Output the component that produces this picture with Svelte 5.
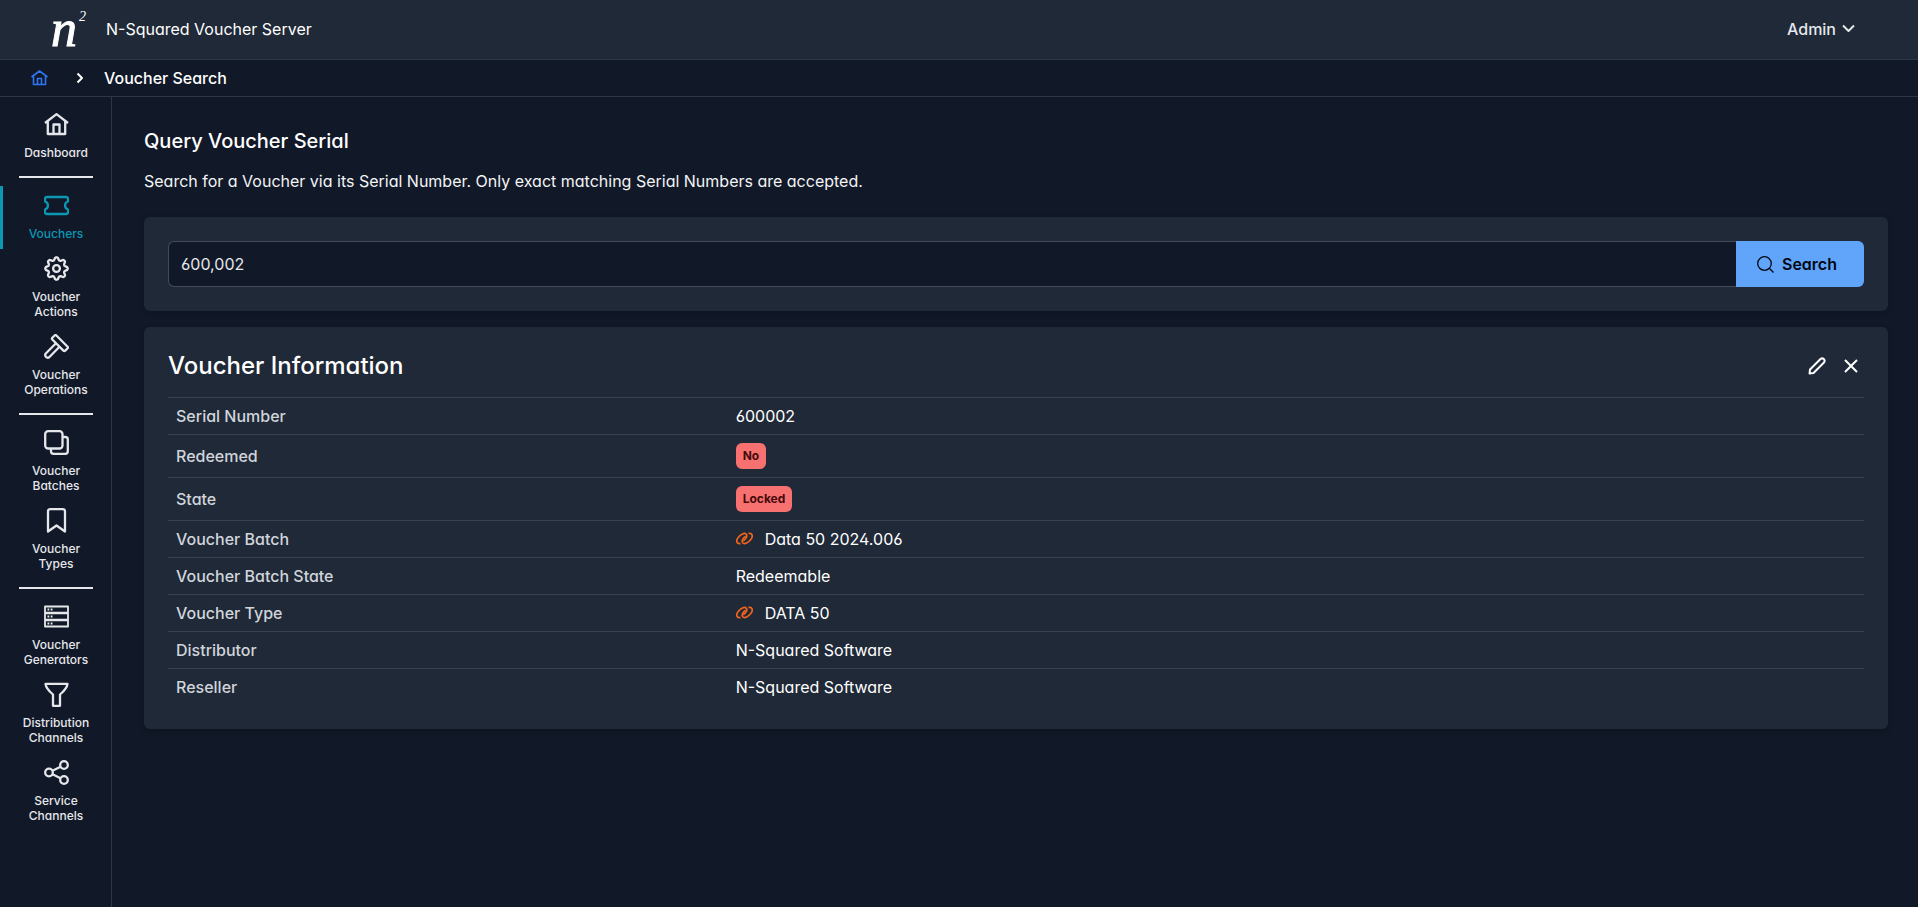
<script lang="ts">
  type IconName =
    | 'home' | 'ticket' | 'gear' | 'hammer' | 'batches' | 'bookmark' | 'server' | 'funnel' | 'share'

  interface NavItem {
    label: string
    icon: IconName
    active?: boolean
  }

  interface Row {
    label: string
    value: string
    kind?: 'tag' | 'link'
  }

  const navGroups: NavItem[][] = [
    [{ label: 'Dashboard', icon: 'home' }],
    [
      { label: 'Vouchers', icon: 'ticket', active: true },
      { label: 'Voucher Actions', icon: 'gear' },
      { label: 'Voucher Operations', icon: 'hammer' },
    ],
    [
      { label: 'Voucher Batches', icon: 'batches' },
      { label: 'Voucher Types', icon: 'bookmark' },
    ],
    [
      { label: 'Voucher Generators', icon: 'server' },
      { label: 'Distribution Channels', icon: 'funnel' },
      { label: 'Service Channels', icon: 'share' },
    ],
  ]

  const rows: Row[] = [
    { label: 'Serial Number', value: '600002' },
    { label: 'Redeemed', value: 'No', kind: 'tag' },
    { label: 'State', value: 'Locked', kind: 'tag' },
    { label: 'Voucher Batch', value: 'Data 50 2024.006', kind: 'link' },
    { label: 'Voucher Batch State', value: 'Redeemable' },
    { label: 'Voucher Type', value: 'DATA 50', kind: 'link' },
    { label: 'Distributor', value: 'N-Squared Software' },
    { label: 'Reseller', value: 'N-Squared Software' },
  ]

  let serial = $state('600,002')
  let showResult = $state(true)

  // Eight-lobed outline for the settings icon
  const gearPath = (() => {
    const points: string[] = []
    for (let i = 0; i <= 96; i++) {
      const a = (i / 96) * Math.PI * 2
      const wave = Math.cos(a * 8)
      const r = 9.8 + 1.4 * Math.sign(wave) * Math.pow(Math.abs(wave), 0.6)
      points.push(`${(12.5 + r * Math.sin(a)).toFixed(2)} ${(12.5 - r * Math.cos(a)).toFixed(2)}`)
    }
    return `M${points.join('L')}Z`
  })()
</script>

{#snippet icon(name: IconName)}
  <svg class="icon" viewBox="0 0 25 25" aria-hidden="true">
    {#if name === 'home'}
      <path d="M1 11L12.500 2.200L24 11M3.800 9.500V22H21.200V9.500M9.500 22V12.500H15.500V22" />
    {:else if name === 'ticket'}
      <path d="M3 4H22Q24 4 24 6V8.500A4.200 4.200 0 0 0 24 16.500V19Q24 21 22 21H3Q1 21 1 19V16.500A4.200 4.200 0 0 0 1 8.500V6Q1 4 3 4Z" />
    {:else if name === 'gear'}
      <path d={gearPath} />
      <circle cx="12.5" cy="12.5" r="3.4" />
    {:else if name === 'hammer'}
      <path d="M8.300 3.800L10.600 1.500Q11.500 0.700 12.400 1.500L23.600 12.700Q24.300 13.500 23.600 14.300L21.300 16.600Q20.300 17.400 19.400 16.600L8.300 5.500Q7.500 4.600 8.300 3.800Z" />
      <path d="M12 9.300L1.800 19.500Q0.600 21 1.800 22.700Q3.500 24.400 5.200 23.200L15.500 12.800" />
    {:else if name === 'batches'}
      <rect x="1.200" y="1.200" width="17.300" height="17.300" rx="3" />
      <path d="M19 7H21.300Q23.800 7 23.800 9.500V21.300Q23.800 23.800 21.300 23.800H9.500Q7 23.800 7 21.300V19" />
    {:else if name === 'bookmark'}
      <path d="M4 23.500V3.500Q4 1.200 6.300 1.200H18.700Q21 1.200 21 3.500V23.500L12.500 17.500Z" />
    {:else if name === 'server'}
      <path stroke-width="1.8" d="M1 2.500H24V22.500H1Z" />
      <path stroke-width="2.6" d="M1 9H24M1 16H24" />
      <path stroke-width="1.8" d="M3.500 5.500H5.300M6.700 5.500H8.500M3.500 12.500H5.300M6.700 12.500H8.500M3.500 19.500H5.300M6.700 19.500H8.500" />
    {:else if name === 'funnel'}
      <path d="M1.500 1.800H23.500Q23 6.500 16 12.500V23.800H9V12.500Q2 6.500 1.500 1.800Z" />
    {:else if name === 'share'}
      <circle cx="5" cy="12.5" r="3.800" />
      <circle cx="20" cy="5" r="3.800" />
      <circle cx="20" cy="20" r="3.800" />
      <path d="M8.500 10.700L16.500 6.800M8.500 14.300L16.500 18.200" />
    {/if}
  </svg>
{/snippet}

<div class="layout">
  <header class="topbar">
    <span class="logo"><i>n</i><sup>2</sup></span>
    <span class="app-name">N-Squared Voucher Server</span>
    <button class="user-menu" type="button">
      Admin
      <svg width="13" height="9" viewBox="0 0 13 9" aria-hidden="true"><path d="M1 1.500L6.500 7L12 1.500" /></svg>
    </button>
  </header>

  <nav class="breadcrumb" aria-label="Breadcrumb">
    <a class="crumb-home" href="#home" aria-label="Home">
      <svg width="17" height="16" viewBox="0 0 17 16" aria-hidden="true">
        <path d="M0.500 7L8.500 1L16.500 7M2.500 6V14.500H14.500V6M6.500 14.500V8.500H10.500V14.500" />
      </svg>
    </a>
    <svg class="separator" width="8" height="12" viewBox="0 0 8 12" aria-hidden="true"><path d="M1.500 1.500L6 6L1.500 10.500" /></svg>
    <span class="crumb-current">Voucher Search</span>
  </nav>

  <div class="body">
    <nav class="sidebar" aria-label="Main">
      {#each navGroups as group}
        <ul>
          {#each group as item}
            <li>
              <a class="nav-item" class:active={item.active} href="#{item.icon}">
                {@render icon(item.icon)}
                <span>{item.label}</span>
              </a>
            </li>
          {/each}
        </ul>
      {/each}
    </nav>

    <main>
      <h1>Query Voucher Serial</h1>
      <p>Search for a Voucher via its Serial Number. Only exact matching Serial Numbers are accepted.</p>

      <form class="card search" onsubmit={(e) => { e.preventDefault(); showResult = true }}>
        <input type="text" aria-label="Serial Number" bind:value={serial} />
        <button type="submit">
          <svg width="17" height="17" viewBox="0 0 17 17" aria-hidden="true">
            <circle cx="7.500" cy="7.500" r="6.800" />
            <path d="M12.300 12.300L16.500 16.500" />
          </svg>
          Search
        </button>
      </form>

      {#if showResult}
        <section class="card result">
          <div class="result-head">
            <h2>Voucher Information</h2>
            <button type="button" aria-label="Edit">
              <svg width="18" height="18" viewBox="0 0 18 18" aria-hidden="true">
                <path d="M1.500 16.500L2 12.500L12.500 2Q14.200 0.700 15.900 2.100Q17.300 3.800 16 5.500L5.500 16Z" />
              </svg>
            </button>
            <button type="button" aria-label="Close" onclick={() => (showResult = false)}>
              <svg width="18" height="18" viewBox="0 0 18 18" aria-hidden="true"><path d="M3 3L15 15M15 3L3 15" /></svg>
            </button>
          </div>

          <table>
            <tbody>
              {#each rows as row}
                <tr>
                  <th scope="row">{row.label}</th>
                  <td>
                    {#if row.kind === 'tag'}
                      <span class="tag">{row.value}</span>
                    {:else if row.kind === 'link'}
                      <a class="record-link" href="#record">
                        <svg width="17" height="14" viewBox="0 0 17 14" aria-hidden="true">
                          <path d="M4.500 11.600C0.500 12.400 -0.300 8.500 2.200 5.500C4.500 2.600 8.500 0.200 10.300 2.300C11.800 4.300 9.800 7.300 7.300 8.700" />
                          <path d="M12.500 1.400C16.500 0.600 17.300 4.500 14.800 7.500C12.500 10.400 8.500 12.800 6.700 10.700C5.200 8.700 7.200 5.700 9.700 4.300" />
                        </svg>
                        {row.value}
                      </a>
                    {:else}
                      {row.value}
                    {/if}
                  </td>
                </tr>
              {/each}
            </tbody>
          </table>
        </section>
      {/if}
    </main>
  </div>
</div>

<style>
  :global(body) {
    background: #111827;
  }

  .layout {
    display: flex;
    flex-direction: column;
    min-height: 100vh;
    background: #111827;
    color: #ffffff;
    font-family: Inter, "Liberation Sans", sans-serif;
    font-feature-settings: "cv02", "cv03", "cv04", "cv11";
    font-size: 16px;
    font-weight: 500;
    line-height: 20px;
  }

  .layout * {
    box-sizing: border-box;
  }

  button,
  input {
    font: inherit;
    font-feature-settings: inherit;
    color: inherit;
  }

  button {
    padding: 0;
    border: none;
    background: none;
    cursor: pointer;
  }

  a {
    color: inherit;
    text-decoration: none;
  }

  svg {
    flex: none;
    fill: none;
    stroke: currentColor;
    stroke-width: 2;
    stroke-linejoin: round;
  }

  /* Header */
  .topbar {
    display: flex;
    align-items: center;
    height: 60px;
    padding: 0 63px 2px 51px;
    border-bottom: 1px solid #2c3645;
    background: #1f2937;
  }

  .logo {
    display: flex;
    gap: 2px;
    width: 55px;
    font-family: "Liberation Serif", serif;
    font-weight: 400;
    font-style: italic;
  }

  .logo i {
    font-size: 52px;
    line-height: 58px;
    -webkit-text-stroke: 1px currentColor;
  }

  .logo sup {
    font-size: 14px;
    line-height: 34px;
    vertical-align: baseline;
  }

  .app-name {
    flex: 1;
    font-weight: 400;
  }

  .user-menu {
    display: flex;
    align-items: center;
    gap: 6px;
    color: #e5e7eb;
  }

  /* Breadcrumb */
  .breadcrumb {
    display: flex;
    align-items: center;
    height: 37px;
    padding: 0 31px;
    border-bottom: 1px solid #2c3645;
  }

  .crumb-home {
    display: flex;
    margin-right: 28px;
    color: #2f74f5;
  }

  .crumb-home svg {
    stroke-width: 1.6;
  }

  .separator {
    margin-right: 20px;
  }

  .body {
    display: flex;
    flex: 1;
  }

  /* Sidebar */
  .sidebar {
    flex: none;
    width: 112px;
    border-right: 1px solid #2c3645;
    color: #e5e7eb;
    font-size: 12px;
    line-height: 15px;
    text-align: center;
  }

  .sidebar ul {
    margin: 0;
    padding: 8px 0;
    list-style: none;
  }

  .sidebar ul + ul::before {
    content: "";
    display: block;
    height: 2px;
    margin: -8px 18px 8px 19px;
    background: #e5e7eb;
  }

  .nav-item {
    display: flex;
    flex-direction: column;
    align-items: center;
    gap: 8px;
    padding: 7px 17px 8px 15px;
    border-left: 3px solid transparent;
  }

  .nav-item.active {
    border-color: #0c97b3;
    color: #0c97b3;
  }

  .icon {
    width: 25px;
    height: 25px;
    stroke-width: 2.3;
  }

  /* Content */
  main {
    flex: 1;
    min-width: 0;
    padding: 32px 30px 32px 32px;
  }

  h1,
  h2,
  p {
    margin: 0;
  }

  h1 {
    font-size: 20px;
    font-weight: 500;
    line-height: 24px;
  }

  p {
    margin: 18px 0 26px;
    font-weight: 400;
    color: #f3f4f6;
  }

  .card {
    padding: 24px;
    border-radius: 6px;
    background: #1f2937;
    box-shadow: 0 2px 6px rgba(0, 0, 0, 0.2);
  }

  .search {
    display: flex;
    margin-bottom: 16px;
  }

  .search input {
    flex: 1;
    min-width: 0;
    height: 46px;
    padding: 0 12px;
    border: 1px solid #424b57;
    border-right: none;
    border-radius: 6px 0 0 6px;
    outline: none;
    background: #111827;
    color: #e5e7eb;
    font-weight: 400;
  }

  .search button {
    display: flex;
    align-items: center;
    gap: 8px;
    width: 128px;
    padding: 0 21px;
    border-radius: 0 6px 6px 0;
    background: #60a5fa;
    color: #030712;
    font-weight: 600;
  }

  .search button svg {
    stroke-width: 1.3;
  }

  .result-head {
    display: flex;
    align-items: center;
    gap: 16px;
    height: 46px;
    padding: 0 4px 16px 0;
  }

  .result-head h2 {
    flex: 1;
    font-size: 24px;
    font-weight: 500;
    line-height: 30px;
  }

  .result-head button {
    display: flex;
  }

  table {
    width: 100%;
    border-spacing: 0;
    table-layout: fixed;
  }

  th,
  td {
    padding: 8px;
    border-top: 1px solid #374151;
    text-align: left;
    font-weight: 400;
  }

  th {
    width: 33%;
    color: #d1d5db;
    font-weight: 500;
  }

  .tag {
    display: block;
    width: fit-content;
    padding: 4px 7px;
    border-radius: 6px;
    background: #f87171;
    color: #450a0a;
    font-size: 12px;
    font-weight: 700;
    line-height: 18px;
  }

  .record-link {
    display: flex;
    align-items: center;
    gap: 12px;
  }

  .record-link svg {
    color: #f2641b;
    stroke-width: 1.7;
  }
</style>
